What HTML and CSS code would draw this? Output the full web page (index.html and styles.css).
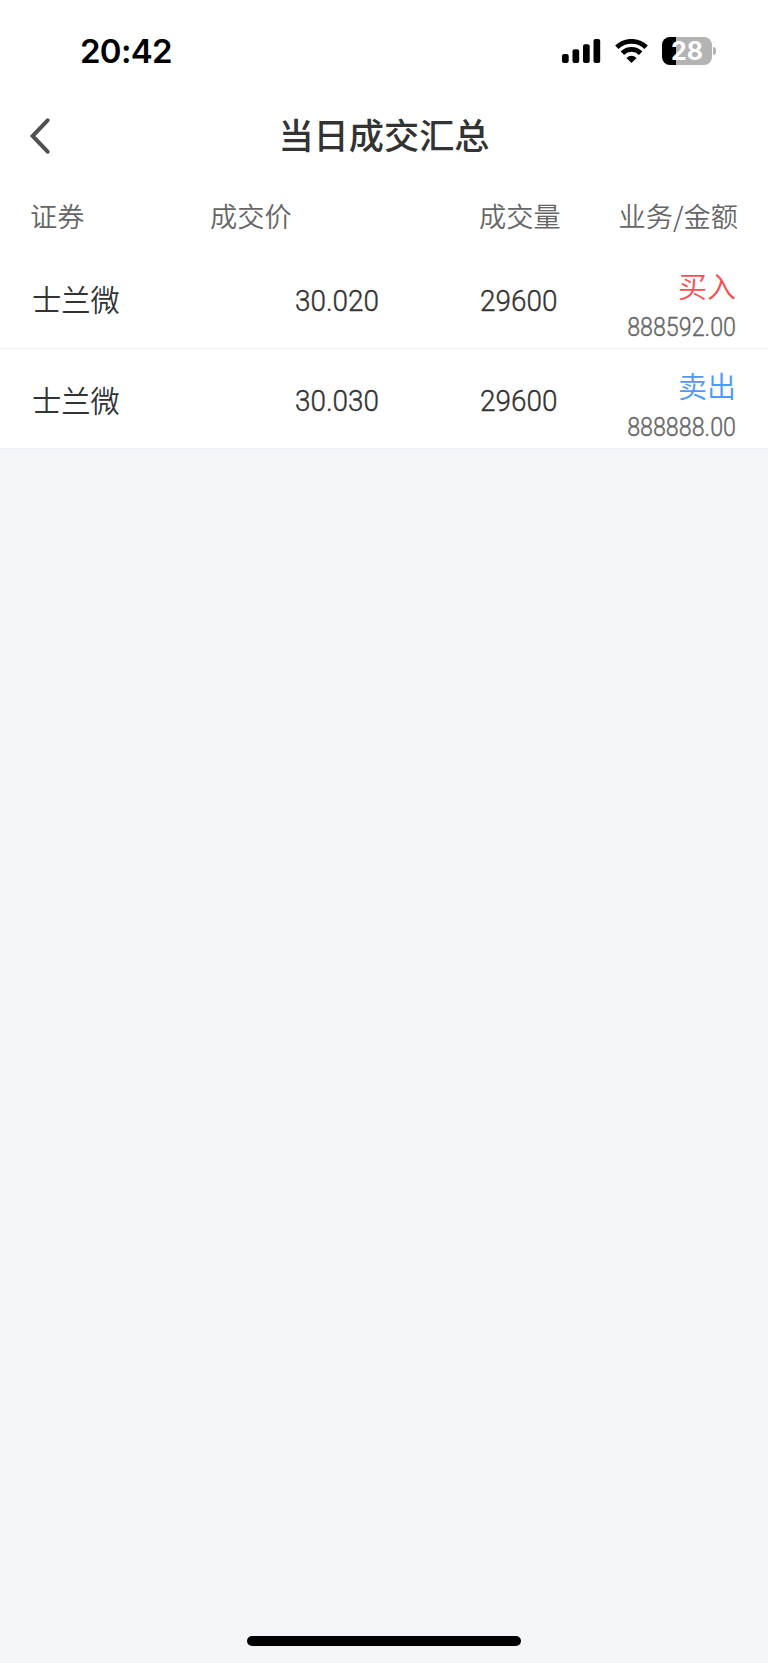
FILE: index.html
```html
<!DOCTYPE html>
<html lang="zh-CN">

<head>
  <meta charset="UTF-8">
  <title>当日成交汇总</title>
  <link rel="stylesheet" href="styles.css">
</head>

<body>
  <div class="status-bar">
    <span class="time">20:42</span>
    <div class="status-icons">
      <svg class="signal" width="39" height="24" viewBox="0 0 39 24">
        <rect x="0" y="15" width="6.7" height="9" rx="2"/>
        <rect x="10.5" y="10.3" width="6.7" height="13.7" rx="2"/>
        <rect x="21" y="5.2" width="6.7" height="18.8" rx="2"/>
        <rect x="31.5" y="0" width="6.7" height="24" rx="2"/>
      </svg>
      <svg class="wifi" width="33" height="24" viewBox="0 0 33 24">
        <g fill="none" stroke="#000" stroke-width="4.7">
          <path d="M1.8 8.2C10 .3 23 .3 31.2 8.2"/>
          <path d="M7.4 14.2C12.5 9.2 20.5 9.2 25.6 14.2"/>
        </g>
        <path d="M16.5 24L11.4 18.9Q16.5 14.8 21.6 18.9Z"/>
      </svg>
      <div class="battery">28</div>
    </div>
  </div>

  <header class="nav">
    <svg class="back" width="22" height="36" viewBox="0 0 22 36">
      <path d="M18.6 2.3L3.6 18L18.6 33.7"/>
    </svg>
    <h1>当日成交汇总</h1>
  </header>

  <div class="row table-head">
    <span>证券</span>
    <span>成交价</span>
    <span>成交量</span>
    <span class="last">业务/金额</span>
  </div>

  <div class="row item">
    <span class="name">士兰微</span>
    <span class="price num">30.020</span>
    <span class="volume num">29600</span>
    <div class="deal">
      <span class="buy">买入</span>
      <span class="amount num">888592.00</span>
    </div>
  </div>
  <div class="row item">
    <span class="name">士兰微</span>
    <span class="price num">30.030</span>
    <span class="volume num">29600</span>
    <div class="deal">
      <span class="sell">卖出</span>
      <span class="amount num">888888.00</span>
    </div>
  </div>

  <div class="home-indicator"></div>
</body>

</html>
```

FILE: styles.css
```css
* {
  box-sizing: border-box;
}

body {
  display: flex;
  flex-direction: column;
  height: 1663px;
  margin: 0;
  background: #f3f5f9;
  color: #333333;
  font-family: "Noto Sans CJK SC", sans-serif;
}

.status-bar {
  display: flex;
  justify-content: space-between;
  height: 102px;
  padding: 37px 52px 0 80px;
  background: #ffffff;
}

.time {
  height: 29px;
  line-height: 29px;
  font-family: Inter, sans-serif;
  font-size: 33px;
  font-weight: 600;
  letter-spacing: -0.7px;
  color: #000000;
}

.status-icons {
  display: flex;
  align-items: center;
  height: 28px;
}

.wifi {
  margin: 0 14px;
}

.battery {
  position: relative;
  width: 50px;
  height: 28px;
  margin-right: 4px;
  border-radius: 8px;
  background: linear-gradient(to right, #000000 14px, #b3b3b3 14px);
  font-family: Inter, sans-serif;
  font-size: 25px;
  font-weight: 700;
  line-height: 28px;
  text-align: center;
  color: #ffffff;
}

.battery::after {
  content: "";
  position: absolute;
  top: 10px;
  right: -4px;
  width: 3px;
  height: 8px;
  border-radius: 0 4px 4px 0;
  background: #b3b3b3;
}

.nav {
  display: grid;
  grid-template-columns: 60px 1fr 60px;
  align-items: center;
  height: 68px;
  padding: 0 29px;
  background: #ffffff;
}

.back path {
  fill: none;
  stroke: #505050;
  stroke-width: 4;
  stroke-linecap: round;
}

h1 {
  margin: 0;
  padding-bottom: 4px;
  font-size: 35.2px;
  font-weight: 500;
  line-height: 64px;
  text-align: center;
}

.row {
  display: grid;
  grid-template-columns: 180px 269px 116px 1fr;
  align-items: center;
  padding: 0 30px;
  background: #ffffff;
}

.table-head {
  height: 78px;
  padding-top: 11px;
  font-size: 27.2px;
  font-weight: 350;
  line-height: 40px;
  color: #666666;
}

.last {
  text-align: right;
  white-space: nowrap;
}

.item {
  height: 101px;
  padding: 0 32px;
  border-bottom: 1px solid #eeeff4;
}

.item:nth-of-type(4) {
  height: 100px;
}

.name {
  font-size: 29.3px;
  font-weight: 350;
  line-height: 40px;
}

.num {
  font-family: Roboto, sans-serif;
  font-weight: 300;
  -webkit-text-stroke: 0.4px;
  transform: scaleX(0.93);
  transform-origin: right;
}

.price {
  width: 167px;
  padding-top: 4px;
  font-size: 30px;
  text-align: right;
}

.volume {
  margin-left: -1px;
  padding-top: 4px;
  font-size: 30px;
  transform-origin: left;
}

.deal {
  display: flex;
  flex-direction: column;
  align-items: flex-end;
  padding-top: 14px;
}

.buy,
.sell {
  height: 42px;
  font-size: 29px;
  font-weight: 350;
  line-height: 40px;
}

.buy {
  color: #f94f4f;
}

.sell {
  color: #4c9bfa;
}

.amount {
  height: 39px;
  font-size: 25px;
  line-height: 42px;
  color: #666666;
}

.home-indicator {
  width: 274px;
  height: 10px;
  margin: auto auto 17px;
  border-radius: 5px;
  background: #000000;
}
```
